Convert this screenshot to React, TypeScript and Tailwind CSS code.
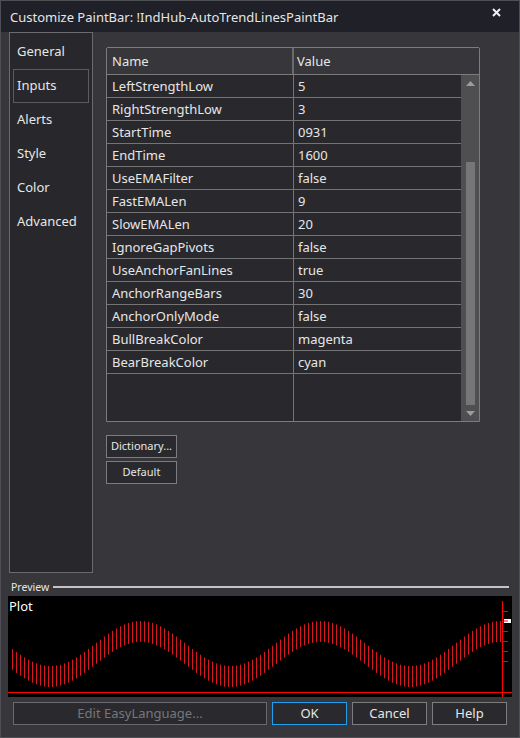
import React from "react";

const rows: [string, string][] = [
  ["LeftStrengthLow", "5"],
  ["RightStrengthLow", "3"],
  ["StartTime", "0931"],
  ["EndTime", "1600"],
  ["UseEMAFilter", "false"],
  ["FastEMALen", "9"],
  ["SlowEMALen", "20"],
  ["IgnoreGapPivots", "false"],
  ["UseAnchorFanLines", "true"],
  ["AnchorRangeBars", "30"],
  ["AnchorOnlyMode", "false"],
  ["BullBreakColor", "magenta"],
  ["BearBreakColor", "cyan"],
];

const navItems = ["General", "Inputs", "Alerts", "Style", "Color", "Advanced"];

function Wave() {
  const bars = [];
  for (let k = 0; k <= 122; k++) {
    const ax = 12 + 4 * k;
    const cy = 654 + 22.5 * Math.cos((2 * Math.PI * (ax - 50)) / 180) - 596;
    const lx = ax - 8 + 0.5;
    bars.push(
      <line key={k} x1={lx} x2={lx} y1={cy - 10.5} y2={cy + 10.5} stroke="#d8181c" strokeWidth={1} />
    );
  }
  const ticks = [15, 25, 35, 45, 55, 65];
  return (
    <svg className="absolute inset-0" width={504} height={101} viewBox="0 0 504 101">
      {bars}
      <line x1={0} x2={504} y1={96.5} y2={96.5} stroke="#ff0000" strokeWidth={1.2} />
      <line x1={494.5} x2={494.5} y1={5} y2={101} stroke="#ff0000" strokeWidth={1.2} />
      {ticks.map((t) => (
        <line key={t} x1={494} x2={500} y1={t + 0.5} y2={t + 0.5} stroke="#ff0000" strokeWidth={1} />
      ))}
      <rect x={496} y={23} width={7} height={4} fill="#ffffff" />
      <line x1={496} x2={500} y1={25} y2={25} stroke="#ff0000" strokeWidth={1} />
    </svg>
  );
}

export default function App() {
  return (
    <div className="w-[520px] h-[738px] bg-[#36363b] border border-[#4e4e55] flex flex-col font-['Noto_Sans',sans-serif] text-[#e6e6e6] text-[13px] overflow-hidden">
      {/* Title bar */}
      <div className="h-[31px] bg-[#1f2028] flex items-center justify-between pl-[9px] pr-[18px] shrink-0">
        <span className="leading-none pt-[1px]">Customize PaintBar: !IndHub-AutoTrendLinesPaintBar</span>
        <svg width="9" height="9" viewBox="0 0 9 9" className="mb-[8px]">
          <path d="M1 1 L8 8 M8 1 L1 8" stroke="#f0f0f0" strokeWidth="2" />
        </svg>
      </div>

      {/* Main */}
      <div className="flex h-[541px] shrink-0">
        <div className="ml-[8px] w-[84px] h-full border border-[#6b6b6e] bg-[#28282c] pt-[2px] px-[3px] flex flex-col">
          {navItems.map((n) => (
            <div
              key={n}
              className={
                "h-[34px] flex items-center pl-[3px] border " +
                (n === "Inputs" ? "border-[#5c5c60]" : "border-transparent")
              }
            >
              {n}
            </div>
          ))}
        </div>

        <div className="ml-[13px] pt-[15px] flex flex-col">
          {/* Grid */}
          <div className="w-[374px] h-[375px] border border-[#7c7c7c] rounded-tl-[2px] rounded-tr-[2px] flex flex-col">
            <div className="h-[27px] flex border-b border-[#7c7c7c] bg-[#36363b] shrink-0">
              <div className="w-[187px] border-r-2 border-[#6a6a6a] flex items-center pl-[5px] pt-[1px]">Name</div>
              <div className="flex-1 flex items-center pl-[3px] pt-[1px]">Value</div>
            </div>
            <div className="flex flex-1 min-h-0">
              <div className="w-[354px] flex flex-col bg-[#29292d]">
                {rows.map(([n, v]) => (
                  <div key={n} className="h-[23px] flex border-b border-[#747474] shrink-0">
                    <div className="w-[187px] border-r border-[#747474] flex items-center pl-[5px] pt-[1px]">{n}</div>
                    <div className="flex-1 flex items-center pl-[4px] pt-[1px]">{v}</div>
                  </div>
                ))}
                <div className="flex-1 flex">
                  <div className="w-[187px] border-r border-[#747474]" />
                </div>
              </div>
              <div className="w-[18px] bg-[#4f4f52] flex flex-col items-center">
                <div className="h-[17px] flex items-center justify-center shrink-0">
                  <svg width="9" height="5" viewBox="0 0 9 5">
                    <path d="M0 5 L4.5 0 L9 5 Z" fill="#9c9c9c" />
                  </svg>
                </div>
                <div className="h-[70px] shrink-0" />
                <div className="h-[243px] w-[9px] bg-[#767678] shrink-0" />
                <div className="flex-1 flex items-center justify-center">
                  <svg width="9" height="5" viewBox="0 0 9 5">
                    <path d="M0 0 L4.5 5 L9 0 Z" fill="#9c9c9c" />
                  </svg>
                </div>
              </div>
            </div>
          </div>

          <button className="mt-[13px] w-[71px] h-[23px] border border-[#7d7d7d] bg-[#2a2a2e] text-[11px] text-[#e6e6e6] flex items-center justify-center">
            Dictionary...
          </button>
          <button className="mt-[3px] w-[71px] h-[23px] border border-[#7d7d7d] bg-[#2a2a2e] text-[11px] text-[#e6e6e6] flex items-center justify-center">
            Default
          </button>
        </div>
      </div>

      {/* Preview header */}
      <div className="h-[23px] flex items-center pl-[10px] pr-[10px] pt-[5px] shrink-0">
        <span className="text-[10.5px] pr-[4px] leading-none">Preview</span>
        <div className="flex-1 h-[2px] bg-[#c4c4c4]" />
      </div>

      {/* Plot */}
      <div className="ml-[7px] w-[504px] h-[101px] bg-black relative shrink-0">
        <Wave />
        <span className="absolute left-[1px] top-[2px] text-white text-[13px] leading-[16px]">Plot</span>
      </div>

      {/* Buttons */}
      <div className="mt-[5px] ml-[12px] flex gap-[5px] shrink-0">
        <button className="w-[254px] h-[23px] border border-[#6a6a6e] bg-[#2a2a2e] text-[#76767c] text-[13px] flex items-center justify-center">
          Edit EasyLanguage...
        </button>
        <button className="w-[75px] h-[23px] border border-[#1e9ff0] bg-[#2a2a2e] text-[#e6e6e6] text-[13px] flex items-center justify-center">
          OK
        </button>
        <button className="w-[75px] h-[23px] border border-[#7d7d7d] bg-[#2a2a2e] text-[#e6e6e6] text-[13px] flex items-center justify-center">
          Cancel
        </button>
        <button className="w-[75px] h-[23px] border border-[#7d7d7d] bg-[#2a2a2e] text-[#e6e6e6] text-[13px] flex items-center justify-center">
          Help
        </button>
      </div>
    </div>
  );
}
